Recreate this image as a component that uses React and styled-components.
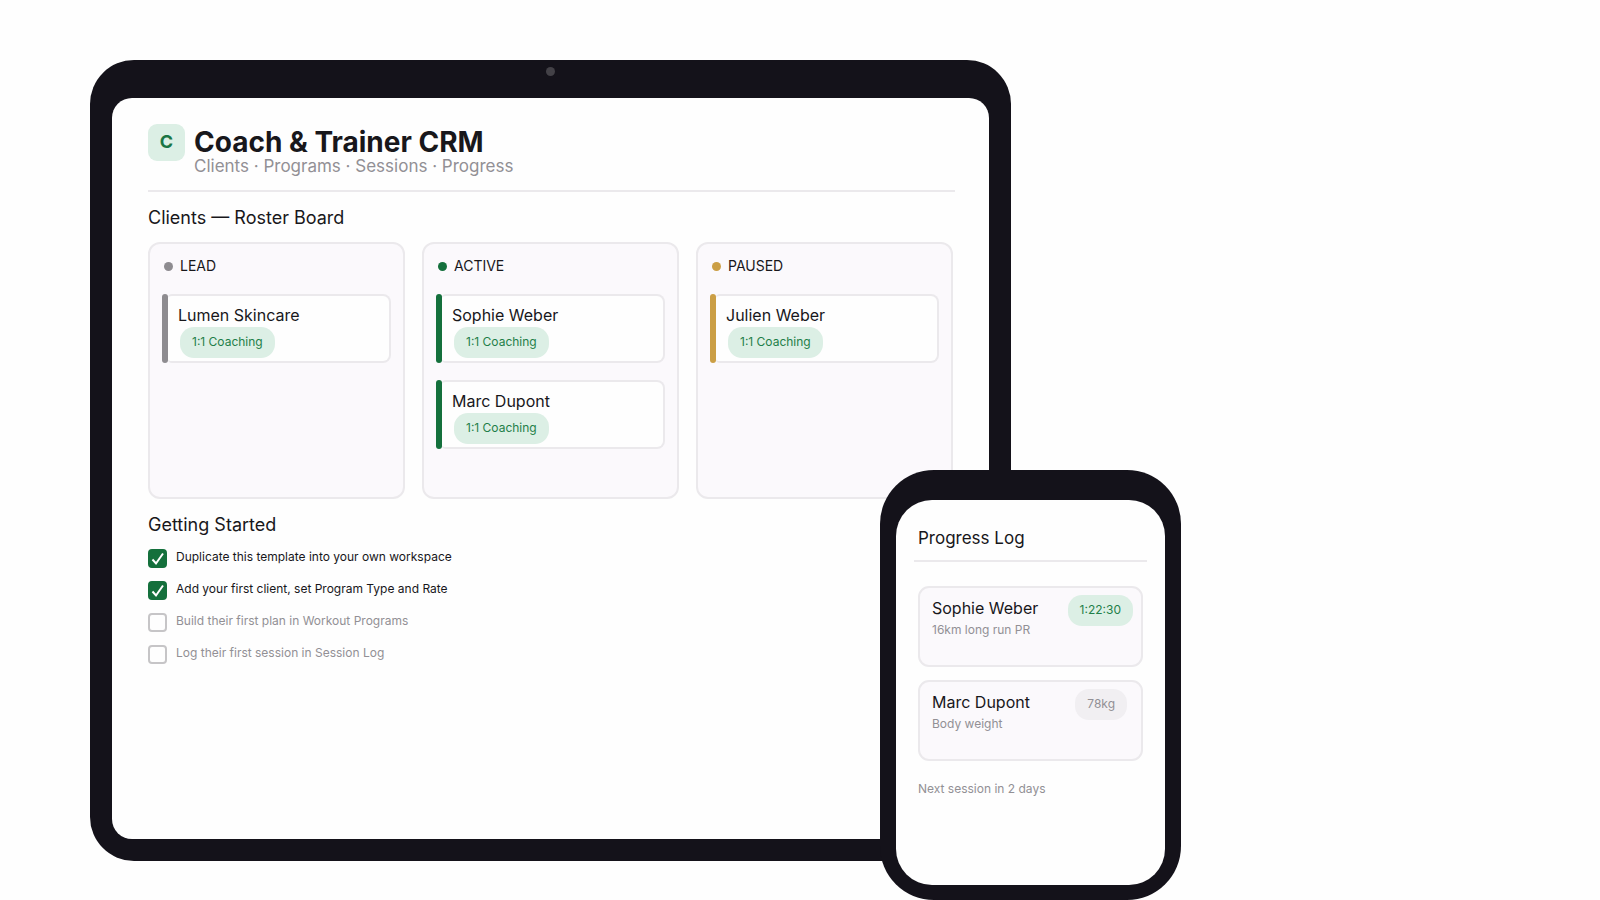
import React, { useState } from "react";
import styled, { createGlobalStyle } from "styled-components";

const columns = [
  {
    title: "LEAD",
    color: "#8e8c90",
    clients: [{ name: "Lumen Skincare", program: "1:1 Coaching" }],
  },
  {
    title: "ACTIVE",
    color: "#14703c",
    clients: [
      { name: "Sophie Weber", program: "1:1 Coaching" },
      { name: "Marc Dupont", program: "1:1 Coaching" },
    ],
  },
  {
    title: "PAUSED",
    color: "#cb9f45",
    clients: [{ name: "Julien Weber", program: "1:1 Coaching" }],
  },
];

const logs = [
  { name: "Sophie Weber", note: "16km long run PR", value: "1:22:30" },
  { name: "Marc Dupont", note: "Body weight", value: "78kg", muted: true },
];

const initialSteps = [
  { id: "duplicate", text: "Duplicate this template into your own workspace", done: true },
  { id: "client", text: "Add your first client, set Program Type and Rate", done: true },
  { id: "plan", text: "Build their first plan in Workout Programs", done: false },
  { id: "session", text: "Log their first session in Session Log", done: false },
];

function App() {
  const [steps, setSteps] = useState(initialSteps);

  const toggleStep = (id) => {
    setSteps((prev) =>
      prev.map((s) => (s.id === id ? { ...s, done: !s.done } : s))
    );
  };

  return (
    <>
      <GlobalStyle />
      <Stage>
        <Devices>
          <Tablet>
            <TabletTop>
              <Camera />
            </TabletTop>
            <TabletScreen>
              <Header>
                <Logo>C</Logo>
                <div>
                  <Title>Coach &amp; Trainer CRM</Title>
                  <Subtitle>Clients · Programs · Sessions · Progress</Subtitle>
                </div>
              </Header>
              <Divider />

              <SectionTitle>Clients — Roster Board</SectionTitle>
              <Board>
                {columns.map((column) => (
                  <Column key={column.title}>
                    <ColumnHeader>
                      <Dot $color={column.color} />
                      {column.title}
                    </ColumnHeader>
                    <CardList>
                      {column.clients.map((client) => (
                        <Card key={client.name}>
                          <CardBar $color={column.color} />
                          <CardBody>
                            <Name>{client.name}</Name>
                            <ProgramPill>{client.program}</ProgramPill>
                          </CardBody>
                        </Card>
                      ))}
                    </CardList>
                  </Column>
                ))}
              </Board>

              <SectionTitle>Getting Started</SectionTitle>
              <StepList>
                {steps.map((step) => (
                  <li key={step.id}>
                    <StepLabel $done={step.done}>
                      <CheckWrap>
                        <Checkbox
                          type="checkbox"
                          checked={step.done}
                          onChange={() => toggleStep(step.id)}
                        />
                        {step.done && (
                          <CheckMark viewBox="0 0 19 19" aria-hidden="true">
                            <path d="M4.5 10.5L8 14.5L15 4.5" />
                          </CheckMark>
                        )}
                      </CheckWrap>
                      {step.text}
                    </StepLabel>
                  </li>
                ))}
              </StepList>
            </TabletScreen>
          </Tablet>

          <Phone>
            <PhoneScreen>
              <PhoneTitle>Progress Log</PhoneTitle>
              <PhoneDivider />
              <LogList>
                {logs.map((log) => (
                  <LogCard key={log.name}>
                    <div>
                      <Name>{log.name}</Name>
                      <LogNote>{log.note}</LogNote>
                    </div>
                    <LogPill $muted={log.muted}>{log.value}</LogPill>
                  </LogCard>
                ))}
              </LogList>
              <NextSession>Next session in 2 days</NextSession>
            </PhoneScreen>
          </Phone>
        </Devices>
      </Stage>
    </>
  );
}

export default App;

const GlobalStyle = createGlobalStyle`
  * {
    box-sizing: border-box;
  }

  body {
    margin: 0;
    background: #fefefe;
    color: #18171b;
    font-family: Inter, "Liberation Sans", sans-serif;
  }

  h1, h2, h3, p, ul {
    margin: 0;
    padding: 0;
    font-weight: 400;
  }

  ul {
    list-style: none;
  }
`;

const Stage = styled.main`
  display: grid;
  grid-template-columns: minmax(0, 1091fr) minmax(0, 329fr);
  min-height: 100vh;
  padding: 60px 90px 39px;
`;

const Devices = styled.div`
  position: relative;
  display: flex;
  padding-right: 170px;
`;

const Tablet = styled.section`
  flex: 1;
  display: flex;
  flex-direction: column;
  min-width: 0;
  padding: 0 22px 22px;
  border-radius: 44px;
  background: #14121a;
`;

const TabletTop = styled.div`
  display: flex;
  justify-content: center;
  height: 38px;
  padding-top: 7px;
`;

const Camera = styled.span`
  width: 9px;
  height: 9px;
  border-radius: 50%;
  background: #434147;
`;

const TabletScreen = styled.div`
  flex: 1;
  padding: 26px 36px;
  border-radius: 20px;
  background: #fefefe;
`;

const Header = styled.header`
  display: flex;
  align-items: flex-start;
  gap: 9px;
  height: 66px;
`;

const Logo = styled.div`
  width: 37px;
  height: 37px;
  border-radius: 9px;
  background: #dcefe5;
  color: #1a7544;
  font-size: 18px;
  font-weight: 700;
  line-height: 36px;
  text-align: center;
`;

const Title = styled.h1`
  font-size: 28px;
  font-weight: 700;
  line-height: 37px;
`;

const Subtitle = styled.p`
  color: #929095;
  font-size: 17px;
  line-height: 11px;
`;

const Divider = styled.hr`
  height: 2px;
  margin: 0 -2px 0 0;
  border: none;
  background: #ebe9ec;
`;

const SectionTitle = styled.h2`
  padding-top: 14px;
  font-size: 18px;
  line-height: 24px;
`;

const Board = styled.div`
  display: grid;
  grid-template-columns: repeat(3, minmax(0, 1fr));
  gap: 17px;
  margin-top: 12px;
`;

const Column = styled.section`
  min-height: 257px;
  padding: 12px;
  border: 2px solid #ebe9ec;
  border-radius: 12px;
  background: #fbf9fc;
`;

const ColumnHeader = styled.h3`
  display: flex;
  align-items: center;
  gap: 7px;
  padding-left: 2px;
  font-size: 14px;
  line-height: 20px;
`;

const Dot = styled.span`
  width: 9px;
  height: 9px;
  border-radius: 50%;
  background: ${(props) => props.$color};
`;

const CardList = styled.div`
  display: flex;
  flex-direction: column;
  gap: 17px;
  margin-top: 18px;
`;

const Card = styled.article`
  display: flex;
  height: 69px;
`;

const CardBar = styled.span`
  width: 6px;
  border-radius: 3px;
  background: ${(props) => props.$color};
`;

const CardBody = styled.div`
  flex: 1;
  padding: 9px 10px 0;
  border: 2px solid #ebe9ec;
  border-left: none;
  border-radius: 4px 8px 8px 4px;
  background: #fefefe;
`;

const Name = styled.h3`
  font-size: 16px;
  line-height: 20px;
`;

const Pill = styled.span`
  display: inline-block;
  height: 31px;
  padding: 0 12px;
  border-radius: 14px;
  background: #dcefe5;
  color: #1f7f49;
  font-size: 12px;
  line-height: 30px;
`;

const ProgramPill = styled(Pill)`
  margin: 2px 2px 0;
`;

const StepList = styled.ul`
  display: flex;
  flex-direction: column;
  gap: 13px;
  margin-top: 12px;
`;

const StepLabel = styled.label`
  display: flex;
  gap: 9px;
  color: ${(props) => (props.$done ? "#18171b" : "#929095")};
  font-size: 12px;
  line-height: 16px;
  cursor: pointer;
`;

const CheckWrap = styled.span`
  position: relative;
  width: 19px;
  height: 19px;
`;

const Checkbox = styled.input`
  appearance: none;
  display: block;
  width: 19px;
  height: 19px;
  margin: 0;
  border: 2px solid #c6c5c7;
  border-radius: 4px;
  background: #fefefe;
  cursor: pointer;

  &:checked {
    border-color: #14703c;
    background: #14703c;
  }
`;

const CheckMark = styled.svg`
  position: absolute;
  inset: 0;
  pointer-events: none;

  path {
    fill: none;
    stroke: #ffffff;
    stroke-width: 2;
  }
`;

const Phone = styled.aside`
  position: absolute;
  right: 0;
  bottom: -39px;
  display: flex;
  width: 301px;
  min-height: 430px;
  padding: 30px 16px 15px;
  border-radius: 54px;
  background: #14121a;
`;

const PhoneScreen = styled.div`
  flex: 1;
  padding: 26px 22px;
  border-radius: 36px;
  background: #fefefe;
`;

const PhoneTitle = styled.h2`
  font-size: 17px;
  line-height: 24px;
`;

const PhoneDivider = styled(Divider)`
  margin: 10px -4px 0;
`;

const LogList = styled.div`
  display: flex;
  flex-direction: column;
  gap: 13px;
  margin-top: 24px;
`;

const LogCard = styled.article`
  display: flex;
  justify-content: space-between;
  align-items: flex-start;
  height: 81px;
  padding: 7px 8px 0 12px;
  border: 2px solid #ebe9ec;
  border-radius: 11px;
  background: #fbf9fc;

  ${Name} {
    margin-top: 3px;
  }
`;

const LogNote = styled.p`
  margin-top: 4px;
  color: #929095;
  font-size: 12px;
  line-height: 16px;
`;

const LogPill = styled(Pill)`
  margin-right: ${(props) => (props.$muted ? "6px" : "0")};
  background: ${(props) => (props.$muted ? "#f1eff2" : "#dcefe5")};
  color: ${(props) => (props.$muted ? "#929095" : "#1f7f49")};
`;

const NextSession = styled.p`
  margin-top: 20px;
  color: #929095;
  font-size: 12px;
  line-height: 16px;
`;
